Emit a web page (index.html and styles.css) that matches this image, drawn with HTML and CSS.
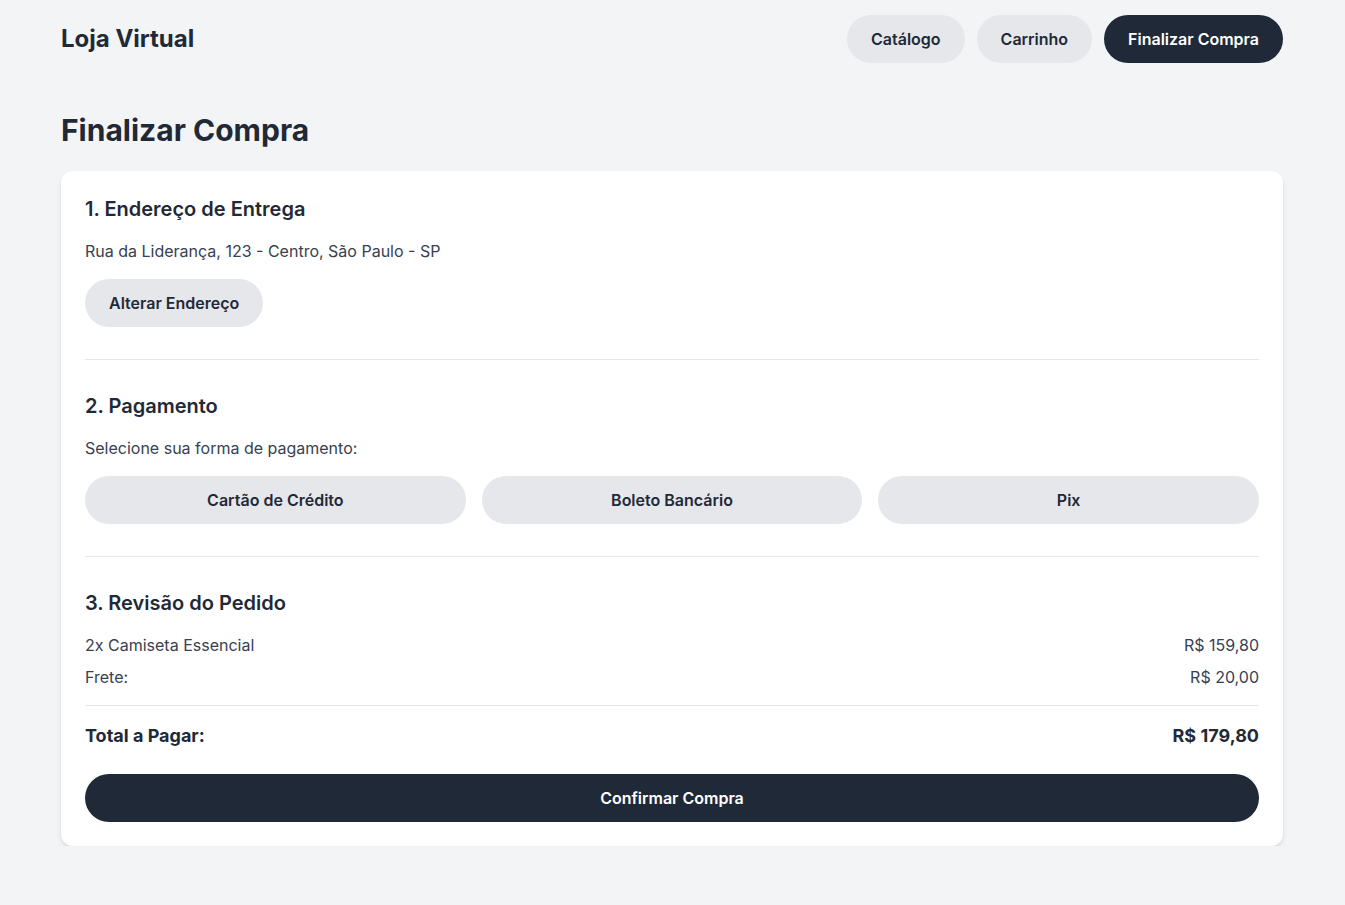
FILE: index.html
```html
<!DOCTYPE html>
<html lang="pt-BR">
<head>
<meta charset="utf-8">
<title>Loja Virtual</title>
<link rel="stylesheet" href="styles.css">
</head>
<body>
<div class="container">
  <header class="header">
    <div class="brand">Loja Virtual</div>
    <nav class="nav">
      <button class="btn btn-light">Catálogo</button>
      <button class="btn btn-light">Carrinho</button>
      <button class="btn btn-dark">Finalizar Compra</button>
    </nav>
  </header>
  <main>
    <h1 class="title">Finalizar Compra</h1>
    <div class="card">
      <section class="section">
        <h2 class="section-title">1. Endereço de Entrega</h2>
        <p class="text">Rua da Liderança, 123 - Centro, São Paulo - SP</p>
        <button class="btn btn-light">Alterar Endereço</button>
      </section>
      <section class="section">
        <h2 class="section-title">2. Pagamento</h2>
        <p class="text">Selecione sua forma de pagamento:</p>
        <div class="pay-grid">
          <button class="btn btn-light">Cartão de Crédito</button>
          <button class="btn btn-light">Boleto Bancário</button>
          <button class="btn btn-light">Pix</button>
        </div>
      </section>
      <section class="section last">
        <h2 class="section-title">3. Revisão do Pedido</h2>
        <div class="rows">
          <div class="row"><span>2x Camiseta Essencial</span><span>R$ 159,80</span></div>
          <div class="row"><span>Frete:</span><span>R$ 20,00</span></div>
        </div>
        <div class="total"><span>Total a Pagar:</span><span>R$ 179,80</span></div>
        <button class="btn btn-dark btn-block">Confirmar Compra</button>
      </section>
    </div>
  </main>
</div>
</body>
</html>
```

FILE: styles.css
```css
* { box-sizing: border-box; }
html, body { margin: 0; padding: 0; }
body {
  background: #f3f4f6;
  color: #1f2937;
  font-family: Inter, "Noto Sans", sans-serif;
  font-size: 16px;
  line-height: 24px;
}
.container {
  width: 100%;
  padding: 0 62px 0 61px;
}
.header {
  display: flex;
  align-items: center;
  justify-content: space-between;
  padding-top: 15px;
}
.brand {
  font-size: 24px;
  line-height: 32px;
  font-weight: 700;
  color: #1f2937;
}
.nav {
  display: flex;
  gap: 12px;
}
.btn {
  font-family: inherit;
  font-size: 16px;
  line-height: 24px;
  font-weight: 600;
  border: none;
  border-radius: 9999px;
  padding: 12px 24px;
  height: 48px;
  cursor: pointer;
}
.btn-light { background: #e5e7eb; color: #1f2937; }
.btn-dark { background: #1f2937; color: #ffffff; }
.title {
  margin: 49px 0 23px;
  font-size: 30px;
  line-height: 36px;
  font-weight: 700;
  color: #1f2937;
}
.card {
  background: #ffffff;
  border-radius: 12px;
  padding: 24px;
  box-shadow: 0 4px 6px -1px rgba(0,0,0,0.1), 0 2px 4px -2px rgba(0,0,0,0.1);
}
.section {
  padding: 32px 0;
  border-bottom: 1px solid #e5e7eb;
}
.section:first-child { padding-top: 0; }
.section.last { padding-bottom: 0; border-bottom: none; }
.section-title {
  margin: 0 0 16px;
  font-size: 20px;
  line-height: 28px;
  font-weight: 600;
  color: #1f2937;
}
.text {
  margin: 0 0 16px;
  color: #374151;
}
.pay-grid {
  display: grid;
  grid-template-columns: repeat(3, 1fr);
  gap: 16px;
}
.rows {
  display: flex;
  flex-direction: column;
  gap: 8px;
  padding-bottom: 16px;
  border-bottom: 1px solid #e5e7eb;
  color: #374151;
}
.row {
  display: flex;
  justify-content: space-between;
}
.total {
  display: flex;
  justify-content: space-between;
  margin: 16px 0 24px;
  font-size: 18px;
  line-height: 28px;
  font-weight: 700;
  color: #1f2937;
}
.btn-block { width: 100%; display: block; }
```
